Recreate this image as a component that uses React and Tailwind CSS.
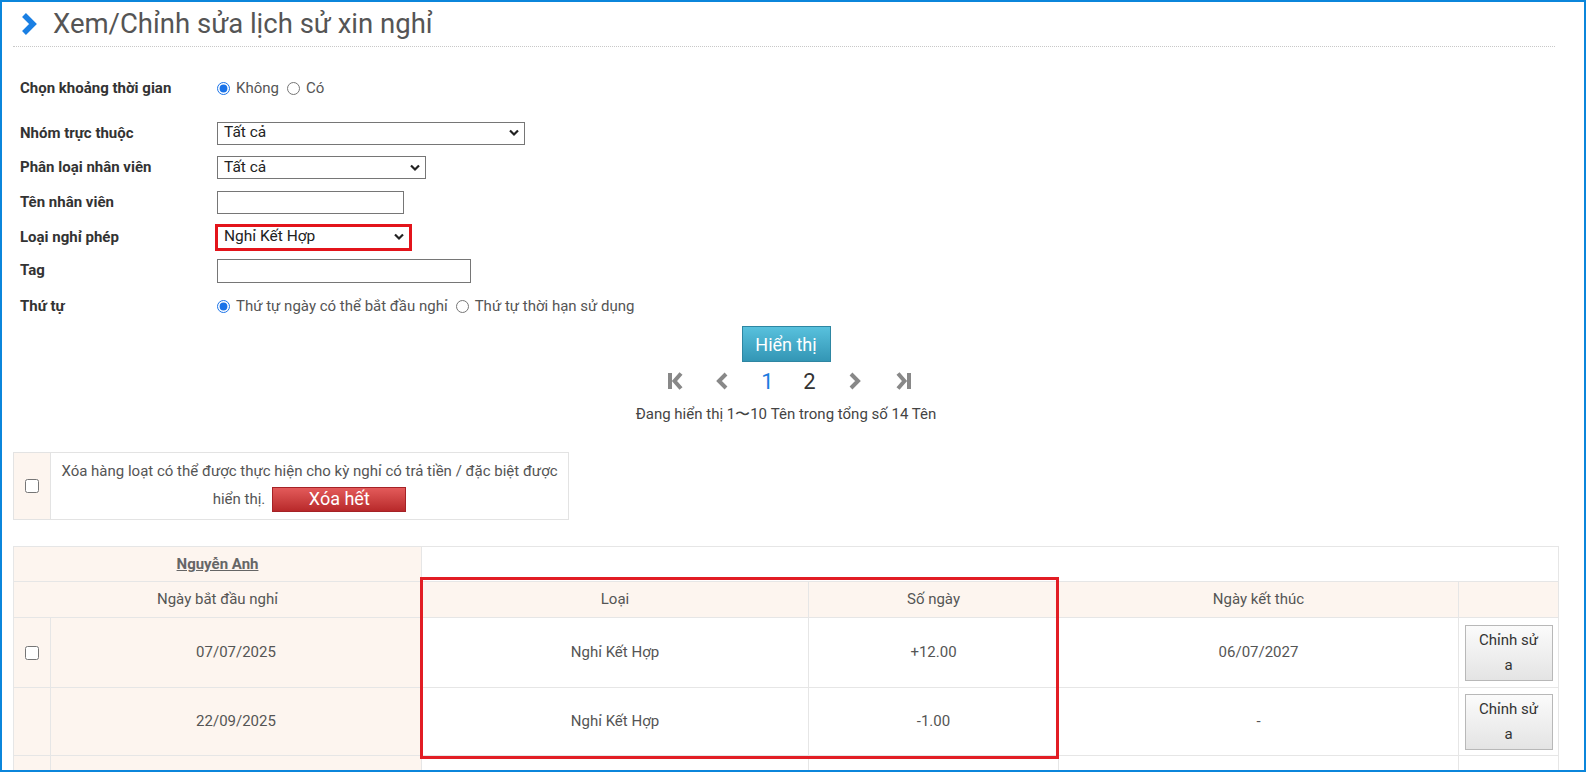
import React from "react";

function Chevron() {
  return (
    <svg width="10" height="7" viewBox="0 0 10 7" className="absolute right-[5px] top-1/2 -translate-y-1/2">
      <polyline points="1,1 5,5 9,1" fill="none" stroke="#222" strokeWidth="2.2" />
    </svg>
  );
}

function FakeSelect({ value, className }) {
  return (
    <div className={`relative flex items-center bg-white ${className}`}>
      <span className="pl-[6px] text-[15.5px] text-[#222] leading-none">{value}</span>
      <Chevron />
    </div>
  );
}

function Row({ label, h, children }) {
  return (
    <div className={`flex items-center ${h}`}>
      <div className="w-[197px] font-bold text-[15px] text-[#333]">{label}</div>
      {children}
    </div>
  );
}

function PageIcon({ kind }) {
  const c = "#888";
  return (
    <svg width="16" height="18" viewBox="0 0 16 18">
      {kind === "first" && (
        <>
          <rect x="1" y="1" width="4" height="16" fill={c} />
          <polyline points="14,1.5 7.5,9 14,16.5" fill="none" stroke={c} strokeWidth="4" />
        </>
      )}
      {kind === "prev" && <polyline points="12,2 5,9 12,16" fill="none" stroke={c} strokeWidth="4" />}
      {kind === "next" && <polyline points="4,2 11,9 4,16" fill="none" stroke={c} strokeWidth="4" />}
      {kind === "last" && (
        <>
          <polyline points="2,1.5 8.5,9 2,16.5" fill="none" stroke={c} strokeWidth="4" />
          <rect x="11" y="1" width="4" height="16" fill={c} />
        </>
      )}
    </svg>
  );
}

function EditButton() {
  return (
    <button className="w-[88px] h-[56px] border border-[#b8b8b8] bg-linear-to-b from-[#fbfbfb] to-[#e4e4e4] text-[15px] leading-[25px] text-[#333]">
      Chỉnh sử
      <br />a
    </button>
  );
}

const cell = "border border-[#e6e6e6] text-center text-[15px] text-[#555]";
const peach = "bg-[#fdf5ef]";

export default function App() {
  const rows = [
    { start: "07/07/2025", type: "Nghỉ Kết Hợp", days: "+12.00", end: "06/07/2027", check: true, h: "h-[70px]" },
    { start: "22/09/2025", type: "Nghỉ Kết Hợp", days: "-1.00", end: "-", check: false, h: "h-[68px]" },
  ];

  return (
    <div className="relative w-[1586px] h-[772px] overflow-hidden bg-white border-2 border-[#0b86db] font-['Roboto',sans-serif] text-[#333]">
      <div className="pl-[11px] pr-[25px]">
        {/* Title */}
        <div className="mr-[4px] h-[45px] flex items-center pl-[7px] border-b border-dotted border-[#c8c8c8]">
          <svg width="18" height="24" viewBox="0 0 18 24">
            <polyline points="4,3 13,12 4,21" fill="none" stroke="#1a7fe3" strokeWidth="5.5" />
          </svg>
          <h1 className="ml-[15px] text-[27.5px] text-[#555] leading-none">Xem/Chỉnh sửa lịch sử xin nghỉ</h1>
        </div>

        {/* Search form */}
        <div className="pl-[7px] mt-[24px]">
          <Row label="Chọn khoảng thời gian" h="h-[34px]">
            <label className="flex items-center text-[15px] text-[#555]">
              <input type="radio" name="range" defaultChecked className="m-0 w-[13px] h-[13px] accent-[#1a73e8]" />
              <span className="ml-[6px]">Không</span>
            </label>
            <label className="flex items-center text-[15px] text-[#555] ml-[8px]">
              <input type="radio" name="range" className="m-0 w-[13px] h-[13px]" />
              <span className="ml-[6px]">Có</span>
            </label>
          </Row>
          <div className="mt-[11px]">
            <Row label="Nhóm trực thuộc" h="h-[34px]">
              <FakeSelect value="Tất cả" className="w-[308px] h-[23px] border border-[#767676]" />
            </Row>
          </div>
          <Row label="Phân loại nhân viên" h="h-[35px]">
            <FakeSelect value="Tất cả" className="w-[209px] h-[23px] border border-[#767676]" />
          </Row>
          <Row label="Tên nhân viên" h="h-[34px]">
            <div className="w-[187px] h-[23px] border border-[#767676]" />
          </Row>
          <Row label="Loại nghỉ phép" h="h-[36px]">
            <FakeSelect value="Nghỉ Kết Hợp" className="ml-[-2px] w-[197px] h-[27px] border-[3px] border-[#e3141b]" />
          </Row>
          <Row label="Tag" h="h-[31px]">
            <div className="w-[254px] h-[24px] border border-[#767676]" />
          </Row>
          <Row label="Thứ tự" h="h-[40px]">
            <label className="flex items-center text-[15px] text-[#555]">
              <input type="radio" name="order" defaultChecked className="m-0 w-[13px] h-[13px] accent-[#1a73e8]" />
              <span className="ml-[6px]">Thứ tự ngày có thể bắt đầu nghỉ</span>
            </label>
            <label className="flex items-center text-[15px] text-[#555] ml-[8px]">
              <input type="radio" name="order" className="m-0 w-[13px] h-[13px]" />
              <span className="ml-[6px]">Thứ tự thời hạn sử dụng</span>
            </label>
          </Row>
        </div>

        {/* Show button */}
        <div className="flex justify-center">
          <button className="w-[89px] h-[36px] bg-linear-to-b from-[#58c1dd] to-[#3396b5] border border-[#2e86a2] text-white text-[18px]">
            Hiển thị
          </button>
        </div>

        {/* Pagination */}
        <div className="mt-[9px] h-[20px] flex items-center justify-center pl-[6px]">
          <div className="w-[20px] flex justify-center"><PageIcon kind="first" /></div>
          <div className="w-[20px] flex justify-center ml-[27px]"><PageIcon kind="prev" /></div>
          <div className="w-[20px] flex justify-center ml-[26px] text-[22px] text-[#1a7be0]">1</div>
          <div className="w-[20px] flex justify-center ml-[22px] text-[22px] text-[#333]">2</div>
          <div className="w-[20px] flex justify-center ml-[25px]"><PageIcon kind="next" /></div>
          <div className="w-[20px] flex justify-center ml-[29px]"><PageIcon kind="last" /></div>
        </div>
        <div className="mt-[13px] text-center text-[15px] text-[#444] leading-[20px]">
          Đang hiển thị 1〜10 Tên trong tổng số 14 Tên
        </div>

        {/* Bulk delete */}
        <div className="mt-[28px] w-[556px] h-[68px] border border-[#e3e3e3] flex">
          <div className={`w-[37px] ${peach} border-r border-[#e3e3e3] flex items-center justify-center`}>
            <input type="checkbox" className="m-0 w-[14px] h-[14px]" />
          </div>
          <div className="flex-1 flex flex-col items-center text-[15px] text-[#555] pt-[4px] px-[4px]">
            <div className="leading-[28px] whitespace-nowrap">
              Xóa hàng loạt có thể được thực hiện cho kỳ nghỉ có trả tiền / đặc biệt được
            </div>
            <div className="h-[28px] flex items-center">
              <span>hiển thị.</span>
              <button className="ml-[7px] w-[134px] h-[25px] leading-none bg-linear-to-b from-[#e35a5a] to-[#b8282a] border border-[#a52226] text-white text-[18px]">
                Xóa hết
              </button>
            </div>
          </div>
        </div>

        {/* Result table */}
        <table className="mt-[26px] w-[1545px] table-fixed border-collapse">
          <colgroup>
            <col className="w-[37px]" />
            <col className="w-[371px]" />
            <col className="w-[387px]" />
            <col className="w-[250px]" />
            <col className="w-[400px]" />
            <col className="w-[100px]" />
          </colgroup>
          <tbody>
            <tr className="h-[35px]">
              <td colSpan={2} className={`${cell} ${peach}`}>
                <span className="font-bold text-[#666] underline">Nguyễn Anh</span>
              </td>
              <td colSpan={4} className={cell}></td>
            </tr>
            <tr className={`h-[36px] ${peach}`}>
              <td colSpan={2} className={cell}>Ngày bắt đầu nghỉ</td>
              <td className={cell}>Loại</td>
              <td className={cell}>Số ngày</td>
              <td className={cell}>Ngày kết thúc</td>
              <td className={cell}></td>
            </tr>
            {rows.map((r) => (
              <tr key={r.start} className={r.h}>
                <td className={`${cell} ${peach}`}>
                  {r.check && <input type="checkbox" className="m-0 w-[14px] h-[14px] align-middle" />}
                </td>
                <td className={`${cell} ${peach}`}>{r.start}</td>
                <td className={cell}>{r.type}</td>
                <td className={cell}>{r.days}</td>
                <td className={cell}>{r.end}</td>
                <td className={cell}>
                  <EditButton />
                </td>
              </tr>
            ))}
            <tr className="h-[40px]">
              <td className={`${cell} ${peach}`}></td>
              <td className={`${cell} ${peach}`}></td>
              <td className={cell}></td>
              <td className={cell}></td>
              <td className={cell}></td>
              <td className={cell}></td>
            </tr>
          </tbody>
        </table>
      </div>

      {/* Annotation highlight */}
      <div className="absolute left-[418px] top-[575px] w-[639px] h-[182px] border-[3px] border-[#e21d24] pointer-events-none" />
    </div>
  );
}
